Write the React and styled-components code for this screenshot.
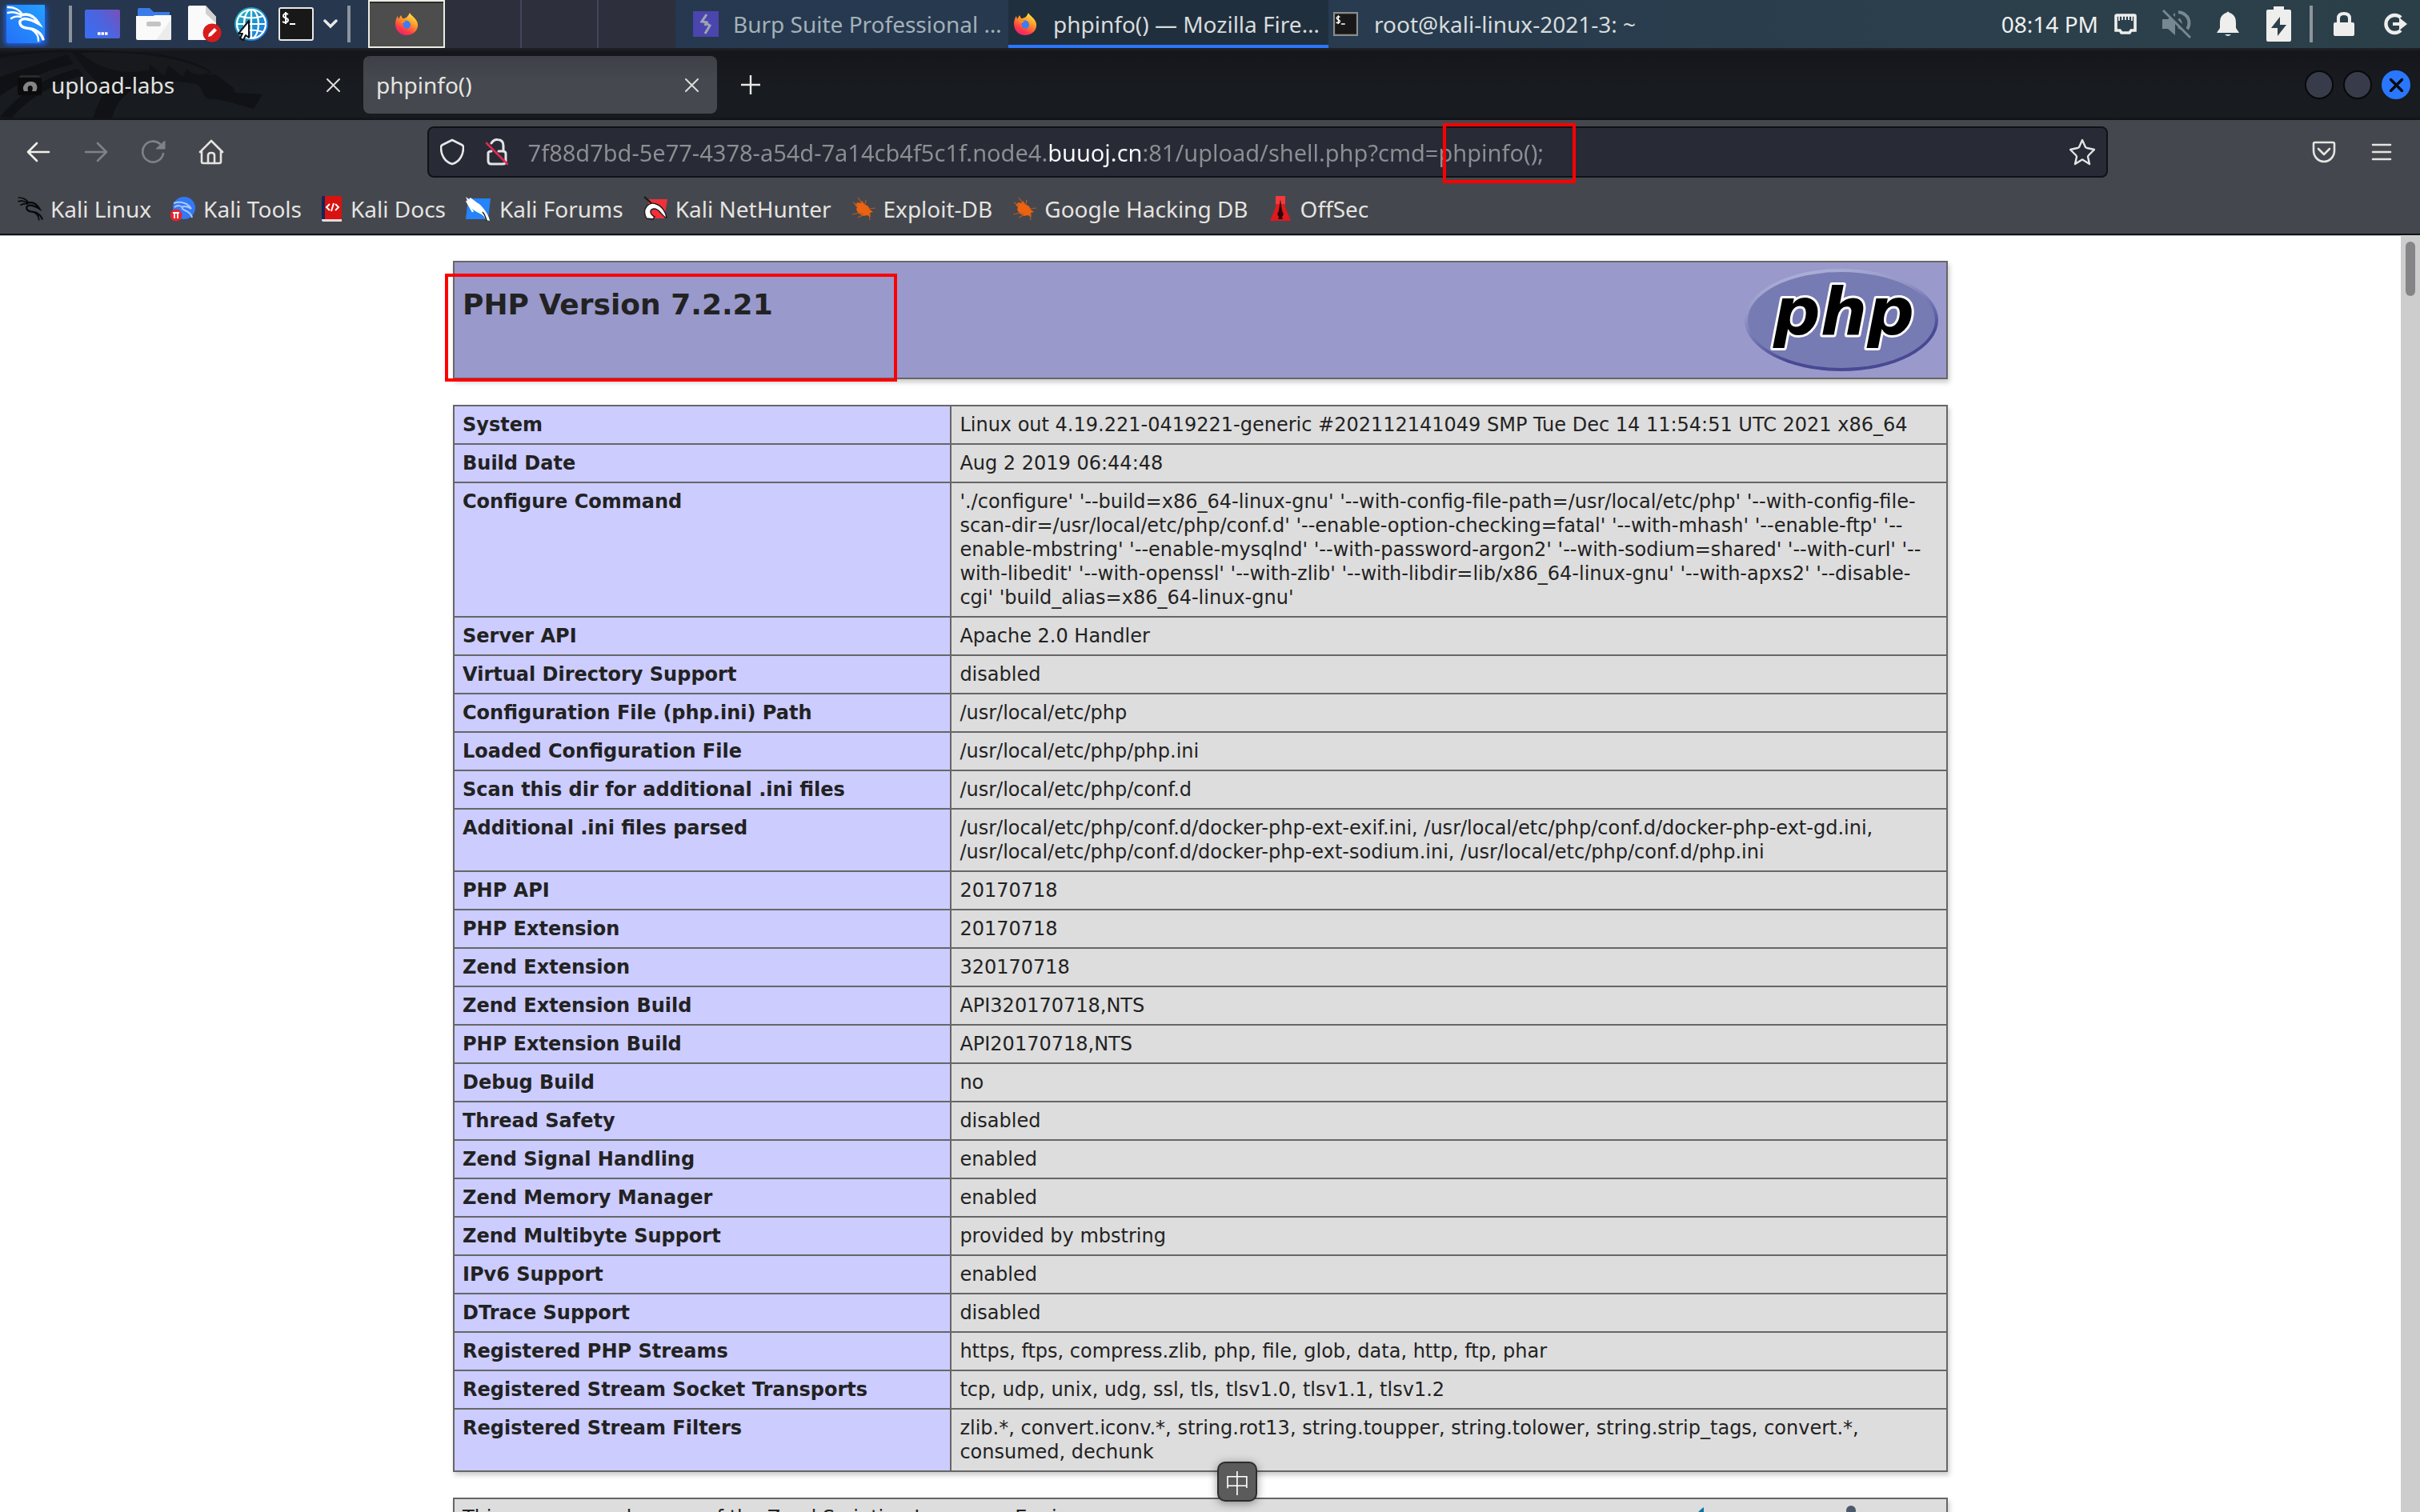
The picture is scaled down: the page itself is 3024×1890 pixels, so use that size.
import React from "react";
import styled, { createGlobalStyle, css } from "styled-components";

const UI_FONT = `"Noto Sans", "Open Sans", sans-serif`;
const PAGE_FONT = `"DejaVu Sans", sans-serif`;

const GlobalStyle = createGlobalStyle`
  * { box-sizing: border-box; }
  html, body { margin: 0; padding: 0; background: #ffffff; }
  button { font: inherit; color: inherit; background: none; border: 0; padding: 0; margin: 0; }
  svg { display: block; flex: none; }
`;

const Desktop = styled.div`
  display: flex;
  flex-direction: column;
  height: 100vh;
  overflow: hidden;
  font-family: ${UI_FONT};
  font-size: 28px;
  line-height: 40px;
  color: #e6e6e4;
`;

/* ---------- desktop panel ---------- */

const Panel = styled.header`
  display: flex;
  align-items: stretch;
  flex: none;
  height: 60px;
  background: linear-gradient(90deg, #26364e 0%, #273a50 50%, #2c404b 88%, #2b3f49 100%);
`;

const PanelButton = styled.button`
  display: flex;
  align-items: center;
  justify-content: center;
  flex: none;
  width: ${(p) => p.$width}px;
`;

const PanelDivider = styled.span`
  flex: none;
  align-self: center;
  width: 4px;
  height: 46px;
  margin: 0 ${(p) => p.$after}px 0 ${(p) => p.$before}px;
  background: #8d949c;
`;

const Workspaces = styled.div`
  display: flex;
  flex: none;
  background: #2d303c;
`;

const Workspace = styled.button`
  display: flex;
  align-items: center;
  justify-content: center;
  width: 96px;
  border-right: 2px solid #41465a;
  &:last-child { border-right: 0; }
  ${(p) =>
    p.$active &&
    css`
      background: #4d4d4d;
      border: 2px solid #ecece4;
      box-shadow: inset 0 2px 0 #2b2b2b;
    `}
`;

const Tasks = styled.nav`
  display: flex;
  flex: 1;
  min-width: 0;
`;

const Task = styled.button`
  display: flex;
  align-items: center;
  gap: ${(p) => p.$gap}px;
  flex: none;
  width: ${(p) => p.$width}px;
  padding: 0 6px 0 ${(p) => p.$inset}px;
  color: ${(p) => (p.$dim ? "#a3b1b8" : "#d8dcdc")};
  text-align: left;
  ${(p) =>
    p.$active &&
    css`
      background: #202f3e;
      box-shadow: inset 0 -4px 0 #2a77ff;
    `}
`;

const TaskTitle = styled.span`
  overflow: hidden;
  white-space: nowrap;
`;

const Tray = styled.div`
  display: flex;
  align-items: stretch;
  flex: none;
`;

const Clock = styled.time`
  align-self: center;
  padding-right: 10px;
  color: #f0f0ee;
`;

/* ---------- browser chrome ---------- */

const TabStrip = styled.div`
  position: relative;
  display: flex;
  align-items: center;
  gap: 6px;
  flex: none;
  height: 90px;
  padding: 2px 12px 0 6px;
  background: linear-gradient(180deg, #202227 0, #15161b 5px, #17181d 20px, #181b1f 50px, #181b1f 86px, #101114 90px);
`;

const Watermark = styled.svg`
  position: absolute;
  left: 0;
  top: 0;
`;

const Tab = styled.div`
  position: relative;
  display: flex;
  align-items: center;
  gap: 10px;
  width: 442px;
  height: 72px;
  padding: 0 20px 0 16px;
  border-radius: 8px;
  ${(p) =>
    p.$active &&
    css`
      background: linear-gradient(180deg, #3f4047, #45484f 30px);
    `}
`;

const TabTitle = styled.span`
  flex: 1;
  color: #e4e4e0;
`;

const IconButton = styled.button`
  display: flex;
  align-items: center;
  justify-content: center;
  flex: none;
  width: ${(p) => p.$width || 72}px;
  height: 64px;
`;

const WindowButtons = styled.div`
  display: flex;
  gap: 12px;
  margin-left: auto;
`;

const WindowButton = styled.button`
  display: flex;
  align-items: center;
  justify-content: center;
  width: 36px;
  height: 36px;
  border-radius: 50%;
  border: 2px solid ${(p) => (p.$close ? "#2a77ff" : "#08090b")};
  background: ${(p) => (p.$close ? "#2a77ff" : "#383c4a")};
`;

const Toolbars = styled.div`
  flex: none;
  background: #45474e;
  border-bottom: 2px solid #111216;
  box-shadow: 0 1px 0 #b8b8ba;
`;

const NavBar = styled.div`
  display: flex;
  align-items: center;
  padding: 8px 12px;
`;

const Spring = styled.span`
  flex: 7;
`;

const UrlBar = styled.label`
  position: relative;
  display: flex;
  align-items: center;
  flex: 62;
  height: 64px;
  padding: 0 14px;
  border: 2px solid #111217;
  border-radius: 8px;
  background: #282a36;
`;

const UrlIcons = styled.span`
  display: flex;
  align-items: center;
  gap: 26px;
  margin-right: 22px;
`;

/* the registered domain (22.42em to 26.5em along the address) is lit, the rest is dimmed */
const UrlInput = styled.input`
  flex: 1;
  min-width: 0;
  height: 44px;
  padding: 0;
  border: 0;
  outline: 0;
  font: inherit;
  font-size: 29px;
  color: transparent;
  background: linear-gradient(90deg, #8d8e92 0 22.42em, #fbfbfe 22.42em 26.5em, #8d8e92 26.5em);
  background-clip: text;
  -webkit-background-clip: text;
`;

const Highlight = styled.span`
  position: absolute;
  left: ${(p) => p.$left}px;
  top: ${(p) => p.$top}px;
  width: ${(p) => p.$width}px;
  height: ${(p) => p.$height}px;
  border: 4px solid #ff0000;
  pointer-events: none;
`;

const Bookmarks = styled.nav`
  display: flex;
  align-items: center;
  gap: 24px;
  height: 62px;
  padding: 0 22px;
`;

const Bookmark = styled.a`
  display: flex;
  align-items: center;
  gap: 9px;
  color: #e4e4e0;
  text-decoration: none;
  white-space: nowrap;
`;

/* ---------- page ---------- */

const Viewport = styled.div`
  display: flex;
  flex: 1;
  min-height: 0;
`;

const Page = styled.main`
  flex: 1;
  min-width: 0;
  overflow: hidden;
  padding: 32px 16px 0;
  font-family: ${PAGE_FONT};
  font-size: 24px;
  line-height: 30px;
  color: #222222;
`;

const ScrollTrack = styled.div`
  display: flex;
  flex: none;
  width: 24px;
  padding: 8px 6px;
  background: #cdcdcd;
`;

const ScrollThumb = styled.div`
  flex: 1;
  height: 68px;
  border-radius: 6px;
  background: #858587;
`;

const InfoBox = styled.section`
  position: relative;
  width: 1868px;
  max-width: 100%;
  margin: 0 auto 32px;
`;

const Banner = styled.div`
  display: flex;
  align-items: flex-start;
  justify-content: space-between;
  min-height: 148px;
  padding: 8px 10px;
  border: 2px solid #666666;
  background: ${(p) => (p.$plain ? "#dddddd" : "#9999cc")};
  box-shadow: 2px 4px 6px #cccccc;
`;

const Title = styled.h1`
  margin: 24px 0;
  font-size: 36px;
  line-height: 42px;
`;

const InfoTable = styled.table`
  width: 100%;
  table-layout: fixed;
  border-collapse: collapse;
  box-shadow: 2px 4px 6px #cccccc;
  th, td {
    padding: 8px 10px;
    border: 2px solid #666666;
    text-align: left;
    vertical-align: top;
    overflow-wrap: break-word;
  }
  th { width: 33.3%; background: #ccccff; }
  td { background: #dddddd; }
`;

const InputMode = styled.div`
  position: fixed;
  left: 1521px;
  bottom: 13px;
  display: flex;
  align-items: center;
  justify-content: center;
  width: 50px;
  height: 50px;
  border: 2px solid #2c2c2c;
  border-radius: 10px;
  background: #5b5b5b;
  box-shadow: 0 2px 12px rgba(0, 0, 0, 0.4);
  color: #ffffff;
  font-family: "Noto Sans CJK SC", sans-serif;
  font-size: 32px;
  font-weight: 300;
`;

/* ---------- drawings ---------- */

const DragonStrokes = () => (
  <>
    <path d="M10 9 C18 9 24 12 28 18 M10 16 C16 14 22 16 27 19 M14 23 C18 20 22 20 26 21" strokeWidth="2.6" />
    <path d="M27 19 C36 16 43 20 49 30 C42 26 34 22 28 24 C22 27 25 34 33 35 C43 36 51 40 54 49" strokeWidth="3.4" />
    <path d="M40 37 C47 42 48 46 48 51" strokeWidth="2.4" />
  </>
);

const Dragon = () => (
  <svg width="32" height="32" viewBox="8 6 48 48">
    <g fill="none" stroke="#08090b" strokeLinecap="round">
      <DragonStrokes />
    </g>
  </svg>
);

const KaliMenu = () => (
  <svg width="64" height="60" viewBox="0 0 64 60">
    <defs>
      <linearGradient id="menuBlue" x1="0" y1="1" x2="1" y2="0">
        <stop offset="0" stopColor="#2470f8" />
        <stop offset="1" stopColor="#23a0ff" />
      </linearGradient>
      <filter id="menuGlow" x="-30%" y="-30%" width="160%" height="160%">
        <feGaussianBlur stdDeviation="3" />
      </filter>
    </defs>
    <rect x="6" y="8" width="52" height="48" rx="3" fill="#1f62f5" filter="url(#menuGlow)" />
    <path d="M8 6 H56 V45 L50 54 H10 Q8 54 8 52 Z" fill="url(#menuBlue)" />
    <g fill="none" stroke="#fff" strokeLinecap="round">
      <DragonStrokes />
    </g>
  </svg>
);

const DesktopIcon = () => (
  <svg width="44" height="36" viewBox="0 0 44 36">
    <defs>
      <linearGradient id="desk" x1="0" y1="0.6" x2="1" y2="0">
        <stop offset="0" stopColor="#3c6cf0" />
        <stop offset="0.5" stopColor="#4f63dc" />
        <stop offset="1" stopColor="#7a4fb8" />
      </linearGradient>
    </defs>
    <rect width="44" height="36" rx="2" fill="url(#desk)" />
    <path d="M16 30 h3.5 M20.5 30 h3.5 M25 30 h3.5" stroke="#fff" strokeWidth="3.5" />
  </svg>
);

const FolderIcon = () => (
  <svg width="44" height="42" viewBox="0 0 44 42">
    <path d="M2 12 V3 Q2 1 4 1 H17 L22 6 H42 V14 H2 Z" fill="#3b7be8" />
    <path d="M0 11 H21 L24 10 H44 V39 Q44 41 42 41 H2 Q0 41 0 39 Z" fill="#fafafa" />
    <path d="M44 15 L25 41 H42 Q44 41 44 39 Z" fill="#ececec" />
    <rect x="13" y="18" width="18" height="6" rx="2" fill="#c4c4c4" />
  </svg>
);

const DocumentIcon = () => (
  <svg width="42" height="46" viewBox="0 0 42 46">
    <path d="M2 0 H22 L35 14 V43 H0 V2 Q0 0 2 0 Z" fill="#fafafa" />
    <path d="M22 0 L35 14 V22 L22 10 Z" fill="#cfcfcf" />
    <circle cx="30" cy="34" r="11.5" fill="#d81c1c" />
    <path d="M25 39 L26 35 L33 28 L36 31 L29 38 Z" fill="#fff" />
  </svg>
);

const GlobeIcon = () => (
  <svg width="44" height="46" viewBox="0 0 44 46">
    <defs>
      <linearGradient id="globe" x1="0" y1="0" x2="1" y2="1">
        <stop offset="0" stopColor="#22b5b5" />
        <stop offset="1" stopColor="#1c72e8" />
      </linearGradient>
    </defs>
    <circle cx="22" cy="23" r="21" fill="url(#globe)" />
    <g fill="none" stroke="#fff" strokeWidth="2.2">
      <circle cx="22" cy="23" r="18" />
      <ellipse cx="22" cy="23" rx="9" ry="18" />
      <path d="M22 5 V41 M4 23 H40 M7 13 Q22 18 37 13 M7 33 Q22 28 37 33" />
    </g>
    <path d="M19 19 V40 L15 37 L12 43 L8 41 L11 35 H6 Z" fill="#fff" stroke="#111" strokeWidth="2" strokeLinejoin="round" />
  </svg>
);

const TerminalIcon = ({ small }) => (
  <svg width={small ? 31 : 44} height={small ? 30 : 42} viewBox="0 0 44 42" preserveAspectRatio="none">
    <rect x="1" y="1" width="42" height="40" rx="2" fill="#181818" stroke={small ? "#8c8c8c" : "#e8e8e8"} strokeWidth={small ? 4 : 2} />
    <path d="M12 9 C9 7 6 8 6 11 C6 14 12 13 12 16 C12 19 8 20 5 18 M9 6 V21 M14 21 H21" fill="none" stroke="#fff" strokeWidth="2" />
  </svg>
);

const ChevronDown = () => (
  <svg width="18" height="12" viewBox="0 0 18 12">
    <path d="M2 2 L9 9 L16 2" fill="none" stroke="#e8e8e8" strokeWidth="3.5" strokeLinecap="round" />
  </svg>
);

const FirefoxIcon = () => (
  <svg width="30" height="30" viewBox="0 0 30 30">
    <defs>
      <linearGradient id="fox" x1="0.8" y1="0" x2="0.25" y2="1">
        <stop offset="0" stopColor="#fff04a" />
        <stop offset="0.4" stopColor="#ff9a28" />
        <stop offset="0.75" stopColor="#ff3c46" />
        <stop offset="1" stopColor="#e81e78" />
      </linearGradient>
    </defs>
    <path d="M19 1 C21 5 28 8 29 15 C30 23 23 29 15 29 C7 29 1 23 1 15 C1 11 2 8 4 5 L5 9 L8 4 L10 8 C14 8 17 6 19 1 Z" fill="url(#fox)" />
    <path d="M9 13 C12 9 20 10 20 16 C20 20 16 22 13 20 C11 19 10 17 12 16 C10 16 9 15 9 13 Z" fill="#3c7cf4" />
    <path d="M8 9 C11 9 13 10 14 12 C12 13 11 13 10 15 C8 13 7 11 8 9 Z" fill="#ff8a24" />
  </svg>
);

const BurpIcon = () => (
  <svg width="32" height="32" viewBox="0 0 32 32">
    <rect width="32" height="32" fill="#4a46ae" />
    <path d="M17 4 L11 13 L17 14 L15 18 M15 14 L21 18 L15 28" fill="none" stroke="#9ea6b4" strokeWidth="3" />
  </svg>
);

const NetworkIcon = () => (
  <svg width="28" height="26" viewBox="0 0 28 26">
    <path d="M2 3 Q2 2 3 2 H25 Q26 2 26 3 V21 H21 L19 24 H9 L7 21 H2 Z" fill="none" stroke="#eeeeec" strokeWidth="3.6" />
    <path d="M6 3 V9 M10 3 V8 M14 3 V8 M18 3 V8 M22 3 V9" stroke="#eeeeec" strokeWidth="1.8" />
  </svg>
);

const MutedIcon = () => (
  <svg width="36" height="36" viewBox="0 0 36 36" fill="none" stroke="#788890">
    <path d="M0 12 H7 L16 4 V32 L7 24 H0 Z" fill="#788890" stroke="none" />
    <path d="M20 12 Q25 17 21 24 M20 3 C34 5 37 18 29 27" strokeWidth="4" />
    <path d="M4 0 L38 34" stroke="#2b3e4b" strokeWidth="4" />
    <path d="M1 1 L35 35" strokeWidth="3" />
  </svg>
);

const BellIcon = () => (
  <svg width="28" height="32" viewBox="0 0 28 32" fill="#eeeeec">
    <path d="M12 2 Q14 -1 16 2 C22 4 24 8 24 15 V21 L28 27 H0 L4 21 V15 C4 8 6 4 12 2 Z M10 29 H18 Q14 33 10 29 Z" />
  </svg>
);

const BatteryIcon = () => (
  <svg width="31" height="44" viewBox="0 0 31 44">
    <path d="M9 0 H22 V4 H29 Q31 4 31 6 V42 Q31 44 29 44 H2 Q0 44 0 42 V6 Q0 4 2 4 H9 Z" fill="#eeeeec" />
    <path d="M17 13 L6 27 H14 V37 L25 23 H17 Z" fill="#2c3f4a" />
  </svg>
);

const LockIcon = () => (
  <svg width="28" height="32" viewBox="0 0 28 32">
    <rect x="1" y="14" width="26" height="17" rx="2" fill="#eeeeec" />
    <path d="M7 15 V9 Q7 3 14 3 Q21 3 21 9 V15" fill="none" stroke="#eeeeec" strokeWidth="4" />
  </svg>
);

const LogoutIcon = () => (
  <svg width="30" height="28" viewBox="0 0 30 28">
    <path d="M22 6 A11 11 0 1 0 22 22" fill="none" stroke="#eeeeec" strokeWidth="4.4" />
    <path d="M12 12 H20 V6 L30 14 L20 22 V16 H12 Z" fill="#eeeeec" />
  </svg>
);

const TabIcon = () => (
  <svg width="32" height="26" viewBox="0 0 32 26">
    <rect x="2" y="1" width="26" height="8" rx="3" fill="#2a2a2c" />
    <rect x="0" y="4" width="30" height="22" rx="2" fill="#0b0b0c" />
    <path d="M8 21 C4 14 12 8 16 9 C22 8 27 14 23 21 H18 C20 16 18 14 16 14 C13 14 12 16 13 21 Z" fill="#858585" />
  </svg>
);

const Cross = ({ color = "#dcdcd8", width = 2 }) => (
  <svg width="17" height="17" viewBox="0 0 17 17">
    <path d="M1 1 L16 16 M16 1 L1 16" stroke={color} strokeWidth={width} strokeLinecap="round" />
  </svg>
);

const Plus = () => (
  <svg width="24" height="24" viewBox="0 0 24 24">
    <path d="M12 0 V24 M0 12 H24" stroke="#e8e8e4" strokeWidth="2.4" />
  </svg>
);

const Arrow = ({ color, flip }) => (
  <svg width="30" height="26" viewBox="0 0 30 26">
    <path d={flip ? "M2 13 H28 M17 2 L28 13 L17 24" : "M28 13 H2 M13 2 L2 13 L13 24"} fill="none" stroke={color} strokeWidth="2.6" strokeLinecap="round" strokeLinejoin="round" />
  </svg>
);

const Reload = () => (
  <svg width="30" height="30" viewBox="0 0 30 30">
    <path d="M27 17 A13 13 0 1 1 23 5" fill="none" stroke="#808287" strokeWidth="2.6" strokeLinecap="round" />
    <path d="M29 1 V11 H18 Z" fill="#808287" stroke="#808287" strokeLinejoin="round" />
  </svg>
);

const Home = () => (
  <svg width="32" height="32" viewBox="0 0 32 32" fill="none" stroke="#e4e4e0" strokeWidth="2.6" strokeLinecap="round" strokeLinejoin="round">
    <path d="M2 16 L16 2 L30 16 M4 14 V28 Q4 30 6 30 H26 Q28 30 28 28 V14" />
    <path d="M12 30 V20 Q12 17 16 17 Q20 17 20 20 V30" />
  </svg>
);

const Shield = () => (
  <svg width="30" height="34" viewBox="0 0 30 34">
    <path d="M15 2 L27 8 Q29 9 29 11 C29 20 25 29 15 32 C5 29 1 20 1 11 Q1 9 3 8 Z" fill="none" stroke="#e8e8ea" strokeWidth="2.6" strokeLinejoin="round" />
  </svg>
);

const InsecureLock = () => (
  <svg width="32" height="34" viewBox="0 0 32 34" fill="none" strokeLinecap="round">
    <path d="M8 6 Q11 1 16 1.5 Q23 2 23 9 V16 M4 18 V28 Q4 32 8 32 H22 Q26 32 26 28 V19 Q26 16 22 16 H17 M4 18 Q5 16 8 16" stroke="#e4e4e6" strokeWidth="3" />
    <path d="M2 6 L28 32" stroke="#e22850" strokeWidth="2.6" />
  </svg>
);

const Star = () => (
  <svg width="32" height="34" viewBox="0 0 32 34">
    <path d="M16 2 L20 11 Q21 12 22 12 L31 14 L24 21 Q23 22 23 23 L25 32 L17 27 Q16 26 15 27 L7 32 L9 23 Q9 22 8 21 L1 14 L10 12 Q11 12 12 11 Z" fill="none" stroke="#e4e4e6" strokeWidth="2.4" strokeLinejoin="round" />
  </svg>
);

const Pocket = () => (
  <svg width="30" height="28" viewBox="0 0 30 28" fill="none" stroke="#e4e4e0" strokeWidth="2.6" strokeLinecap="round" strokeLinejoin="round">
    <path d="M4 2 H26 Q28 2 28 4 V12 C28 20 22 26 15 26 C8 26 2 20 2 12 V4 Q2 2 4 2 Z M8 10 L15 17 L22 10" />
  </svg>
);

const Menu = () => (
  <svg width="26" height="22" viewBox="0 0 26 22">
    <path d="M2 2 H24 M2 11 H24 M2 20 H24" stroke="#e4e4e0" strokeWidth="2.6" strokeLinecap="round" />
  </svg>
);

const ToolsIcon = () => (
  <svg width="32" height="32" viewBox="0 0 32 32">
    <ellipse cx="17" cy="15" rx="14" ry="14" fill="#3478f6" />
    <path d="M4 9 C13 6 22 9 26 16 C20 12 13 12 15 16 C17 19 25 18 27 27 M5 14 C9 11 13 12 15 14" fill="none" stroke="#a9c8ff" strokeWidth="2" />
    <circle cx="7" cy="24" r="7.5" fill="#e8232c" />
    <path d="M3 21 H11 M5 21 V28 M9 21 V28" stroke="#fff" strokeWidth="1.8" />
  </svg>
);

const DocsIcon = () => (
  <svg width="28" height="32" viewBox="0 0 28 32">
    <path d="M1 2 Q1 0 3 0 H26 V29 H1 Z" fill="#d8120f" />
    <path d="M1 2 Q1 0 3 0 H5 V29 H1 Z" fill="#14245a" />
    <path d="M1 29 H26 V32 H2 Q1 31 1 29 Z" fill="#e0dede" />
    <path d="M11 10 L7 14 L11 18 M18 10 L22 14 L18 18 M16 9 L13 19" fill="none" stroke="#fff" strokeWidth="2" />
  </svg>
);

const ForumsIcon = () => (
  <svg width="34" height="32" viewBox="0 0 34 32">
    <path d="M4 3 H32 L29 29 H1 Z" fill="#2484f8" />
    <path d="M1 1 C7 7 15 6 20 12 C24 16 30 24 31 31 L26 30 C24 23 18 22 13 19 C6 15 4 8 1 1 Z" fill="#fff" />
    <path d="M2 6 L10 20 M6 3 L14 9" stroke="#fff" strokeWidth="2.4" />
    <path d="M22 20 C26 24 26 28 27 31" fill="none" stroke="#141414" strokeWidth="1.4" />
  </svg>
);

const NetHunterIcon = () => (
  <svg width="32" height="32" viewBox="0 0 32 32">
    <path d="M8 4 H31 L27 28 H4 Z" fill="#f2303a" />
    <path d="M2 1 L11 9" stroke="#151515" strokeWidth="2" />
    <path d="M5 28 C-2 16 8 6 17 10 C25 13 29 21 30 27 C24 26 21 15 14 16 C8 17 9 23 15 26 L13 29 Z" fill="#fff" stroke="#1a1a1a" strokeWidth="1.4" />
  </svg>
);

const ExploitIcon = () => (
  <svg width="32" height="32" viewBox="0 0 32 32">
    <path d="M5 11 L9 8 L12 9 L14 6 L17 10 L22 13 L24 17 L28 20 L24 21 L25 26 L20 24 L16 25 L10 22 L7 17 L8 14 Z" fill="#ec620e" />
    <path d="M9 2 L14 9 M3 8 L9 12 M2 23 L10 21 L16 23 M31 15 L23 16 M19 5 L18 10 M15 24 L9 27 M23 23 L24 30" stroke="#b35d24" strokeWidth="1.2" fill="none" />
  </svg>
);

const OffSecIcon = () => (
  <svg width="32" height="32" viewBox="0 0 32 32">
    <path d="M10 0 H22 V14 L29 31 H3 L10 14 Z" fill="#e0191e" />
    <path d="M10 0 H22 V10 H10 Z" fill="#f43a3c" />
    <path d="M16 4 L18 18 L20 23 L18 26 L19 29 H13 L14 26 L12 23 L14 18 Z" fill="#2a0807" />
  </svg>
);

const PhpLogo = () => (
  <svg width="242" height="128" viewBox="0 0 242 128">
    <defs>
      <linearGradient id="rim" x1="0.3" y1="0" x2="0.7" y2="1">
        <stop offset="0" stopColor="#aeb2d5" />
        <stop offset="0.3" stopColor="#9496c6" />
        <stop offset="0.55" stopColor="#6c6eae" />
        <stop offset="0.75" stopColor="#484893" />
        <stop offset="1" stopColor="#484893" />
      </linearGradient>
    </defs>
    <ellipse cx="121" cy="64" rx="121" ry="64" fill="url(#rim)" />
    <ellipse cx="121" cy="64" rx="117" ry="60" fill="#777bb3" />
    <text x="124" y="82" textAnchor="middle" fontFamily="DejaVu Sans" fontWeight="700" fontStyle="italic" fontSize="82" fill="#000" stroke="#fff" strokeWidth="6" strokeLinejoin="round" paintOrder="stroke">
      php
    </text>
  </svg>
);

const ZendLogo = () => (
  <svg width="320" height="100" viewBox="0 0 320 100">
    <path d="M27 2 C18 8 12 18 10 30 H27 Z" fill="#0679a3" />
    <circle cx="211" cy="6" r="6" fill="#4a5a6b" />
  </svg>
);

/* ---------- data ---------- */

const bookmarks = [
  ["Kali Linux", <Dragon />],
  ["Kali Tools", <ToolsIcon />],
  ["Kali Docs", <DocsIcon />],
  ["Kali Forums", <ForumsIcon />],
  ["Kali NetHunter", <NetHunterIcon />],
  ["Exploit-DB", <ExploitIcon />],
  ["Google Hacking DB", <ExploitIcon />],
  ["OffSec", <OffSecIcon />],
];

const rows = [
  ["System", "Linux out 4.19.221-0419221-generic #202112141049 SMP Tue Dec 14 11:54:51 UTC 2021 x86_64"],
  ["Build Date", "Aug 2 2019 06:44:48"],
  [
    "Configure Command",
    "'./configure' '--build=x86_64-linux-gnu' '--with-config-file-path=/usr/local/etc/php' '--with-config-file-scan-dir=/usr/local/etc/php/conf.d' '--enable-option-checking=fatal' '--with-mhash' '--enable-ftp' '--enable-mbstring' '--enable-mysqlnd' '--with-password-argon2' '--with-sodium=shared' '--with-curl' '--with-libedit' '--with-openssl' '--with-zlib' '--with-libdir=lib/x86_64-linux-gnu' '--with-apxs2' '--disable-cgi' 'build_alias=x86_64-linux-gnu'",
  ],
  ["Server API", "Apache 2.0 Handler"],
  ["Virtual Directory Support", "disabled"],
  ["Configuration File (php.ini) Path", "/usr/local/etc/php"],
  ["Loaded Configuration File", "/usr/local/etc/php/php.ini"],
  ["Scan this dir for additional .ini files", "/usr/local/etc/php/conf.d"],
  [
    "Additional .ini files parsed",
    "/usr/local/etc/php/conf.d/docker-php-ext-exif.ini, /usr/local/etc/php/conf.d/docker-php-ext-gd.ini, /usr/local/etc/php/conf.d/docker-php-ext-sodium.ini, /usr/local/etc/php/conf.d/php.ini",
  ],
  ["PHP API", "20170718"],
  ["PHP Extension", "20170718"],
  ["Zend Extension", "320170718"],
  ["Zend Extension Build", "API320170718,NTS"],
  ["PHP Extension Build", "API20170718,NTS"],
  ["Debug Build", "no"],
  ["Thread Safety", "disabled"],
  ["Zend Signal Handling", "enabled"],
  ["Zend Memory Manager", "enabled"],
  ["Zend Multibyte Support", "provided by mbstring"],
  ["IPv6 Support", "enabled"],
  ["DTrace Support", "disabled"],
  ["Registered PHP Streams", "https, ftps, compress.zlib, php, file, glob, data, http, ftp, phar"],
  ["Registered Stream Socket Transports", "tcp, udp, unix, udg, ssl, tls, tlsv1.0, tlsv1.1, tlsv1.2"],
  [
    "Registered Stream Filters",
    "zlib.*, convert.iconv.*, string.rot13, string.toupper, string.tolower, string.strip_tags, convert.*, consumed, dechunk",
  ],
];

/* ---------- sections ---------- */

const DesktopPanel = () => (
  <Panel>
    <PanelButton $width={64} aria-label="Applications"><KaliMenu /></PanelButton>
    <PanelDivider $before={22} $after={6} />
    <PanelButton $width={64} aria-label="Show desktop"><DesktopIcon /></PanelButton>
    <PanelButton $width={64} aria-label="Files"><FolderIcon /></PanelButton>
    <PanelButton $width={64} aria-label="Text editor"><DocumentIcon /></PanelButton>
    <PanelButton $width={52} aria-label="Web browser"><GlobeIcon /></PanelButton>
    <PanelButton $width={60} aria-label="Terminal"><TerminalIcon /></PanelButton>
    <PanelButton $width={26} aria-label="More terminals"><ChevronDown /></PanelButton>
    <PanelDivider $before={8} $after={22} />
    <Workspaces>
      <Workspace $active aria-label="Workspace 1"><FirefoxIcon /></Workspace>
      <Workspace aria-label="Workspace 2" />
      <Workspace aria-label="Workspace 3" />
      <Workspace aria-label="Workspace 4" />
    </Workspaces>
    <Tasks>
      <Task $width={416} $inset={22} $gap={18} $dim>
        <BurpIcon />
        <TaskTitle>Burp Suite Professional …</TaskTitle>
      </Task>
      <Task $width={400} $inset={6} $gap={20} $active>
        <FirefoxIcon />
        <TaskTitle>phpinfo() — Mozilla Fire…</TaskTitle>
      </Task>
      <Task $width={420} $inset={6} $gap={20}>
        <TerminalIcon small />
        <TaskTitle>root@kali-linux-2021-3: ~</TaskTitle>
      </Task>
    </Tasks>
    <Tray>
      <Clock>08:14 PM</Clock>
      <PanelButton $width={48} aria-label="Network"><NetworkIcon /></PanelButton>
      <PanelButton $width={80} aria-label="Volume"><MutedIcon /></PanelButton>
      <PanelButton $width={48} aria-label="Notifications"><BellIcon /></PanelButton>
      <PanelButton $width={78} aria-label="Battery"><BatteryIcon /></PanelButton>
      <PanelDivider $before={0} $after={6} />
      <PanelButton $width={66} aria-label="Lock screen"><LockIcon /></PanelButton>
      <PanelButton $width={62} aria-label="Log out"><LogoutIcon /></PanelButton>
    </Tray>
  </Panel>
);

const BrowserTabs = () => (
  <TabStrip>
    <Watermark width="340" height="88" viewBox="0 0 340 88">
      <path d="M0 8 C70 -2 150 4 200 8 C235 14 255 22 264 30 L258 34 L270 33 L292 50 L294 56 L328 58 L317 76 C300 72 275 62 262 64 C250 60 255 48 245 45 C215 40 185 38 165 52 C150 62 142 76 140 88 H116 C122 70 130 56 132 52 C115 38 100 20 90 5 Q45 4 0 12 Z" fill="#101215" />
      <path d="M100 6 C125 26 150 34 186 28 L187 20 L205 35 L211 22 L228 36 L234 26 C240 34 252 36 262 30 C238 16 180 2 100 6 Z" fill="#17191d" />
      <path d="M0 36 L84 8 L92 20 C55 28 25 42 0 60 Z M0 86 C20 62 55 34 98 26 L104 34 C68 44 36 62 14 88 Z" fill="#0f1114" />
    </Watermark>
    <Tab>
      <TabIcon />
      <TabTitle>upload-labs</TabTitle>
      <IconButton $width={24} aria-label="Close upload-labs"><Cross /></IconButton>
    </Tab>
    <Tab $active>
      <TabTitle>phpinfo()</TabTitle>
      <IconButton $width={24} aria-label="Close phpinfo()"><Cross /></IconButton>
    </Tab>
    <IconButton aria-label="New tab"><Plus /></IconButton>
    <WindowButtons>
      <WindowButton aria-label="Minimize" />
      <WindowButton aria-label="Maximize" />
      <WindowButton $close aria-label="Close window"><Cross color="#0a0a0c" width={3.5} /></WindowButton>
    </WindowButtons>
  </TabStrip>
);

const BrowserToolbars = () => (
  <Toolbars>
    <NavBar>
      <IconButton aria-label="Back"><Arrow color="#f0f0ee" /></IconButton>
      <IconButton aria-label="Forward"><Arrow color="#808287" flip /></IconButton>
      <IconButton aria-label="Reload"><Reload /></IconButton>
      <IconButton aria-label="Home"><Home /></IconButton>
      <Spring />
      <UrlBar>
        <UrlIcons>
          <Shield />
          <InsecureLock />
        </UrlIcons>
        <UrlInput
          type="text"
          aria-label="Address"
          defaultValue="7f88d7bd-5e77-4378-a54d-7a14cb4f5c1f.node4.buuoj.cn:81/upload/shell.php?cmd=phpinfo();"
        />
        <Star />
        <Highlight $left={1267} $top={-6} $width={166} $height={75} />
      </UrlBar>
      <Spring />
      <IconButton aria-label="Save to Pocket"><Pocket /></IconButton>
      <IconButton aria-label="Open menu"><Menu /></IconButton>
    </NavBar>
    <Bookmarks>
      {bookmarks.map(([label, icon]) => (
        <Bookmark href="#" key={label}>
          {icon}
          {label}
        </Bookmark>
      ))}
    </Bookmarks>
  </Toolbars>
);

export default function App() {
  return (
    <>
      <GlobalStyle />
      <Desktop>
        <DesktopPanel />
        <BrowserTabs />
        <BrowserToolbars />
        <Viewport>
          <Page>
            <InfoBox>
              <Banner>
                <Title>PHP Version 7.2.21</Title>
                <PhpLogo />
              </Banner>
              <Highlight $left={-10} $top={16} $width={565} $height={135} />
            </InfoBox>
            <InfoBox>
              <InfoTable>
                <tbody>
                  {rows.map(([name, value]) => (
                    <tr key={name}>
                      <th scope="row">{name}</th>
                      <td>{value}</td>
                    </tr>
                  ))}
                </tbody>
              </InfoTable>
            </InfoBox>
            <InfoBox>
              <Banner $plain>
                <span>This program makes use of the Zend Scripting Language Engine:</span>
                <ZendLogo />
              </Banner>
            </InfoBox>
          </Page>
          <ScrollTrack>
            <ScrollThumb />
          </ScrollTrack>
        </Viewport>
      </Desktop>
      <InputMode>中</InputMode>
    </>
  );
}
